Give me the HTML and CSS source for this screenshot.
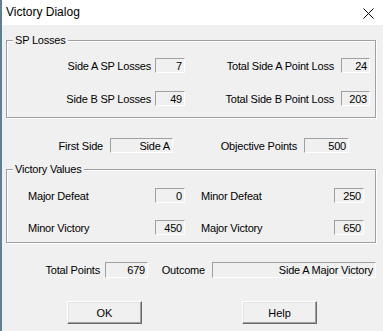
FILE: index.html
```html
<!DOCTYPE html>
<html>
<head>
<meta charset="utf-8">
<link rel="stylesheet" href="styles.css">
</head>
<body>
<div class="window">
  <div class="titlebar">
    <span class="title">Victory Dialog</span>
    <svg class="close" width="11" height="11" viewBox="0 0 11 11"><path d="M0.5 0.5 L10.5 10.5 M10.5 0.5 L0.5 10.5" stroke="#000" stroke-width="1" fill="none"/></svg>
  </div>
  <div class="content">
    <div class="group group-sp">
      <span class="legend">SP Losses</span>
      <div class="sp-grid">
        <span class="lbl lbl-r1">Side A SP Losses</span><span class="field">7</span>
        <span class="lbl lbl-r2">Total Side A Point Loss</span><span class="field">24</span>
        <span class="lbl lbl-r1">Side B SP Losses</span><span class="field">49</span>
        <span class="lbl lbl-r2">Total Side B Point Loss</span><span class="field">203</span>
      </div>
    </div>
    <div class="first-row">
      <span class="lbl lbl-r">First Side</span><span class="field">Side A</span>
      <span class="lbl lbl-r">Objective Points</span><span class="field">500</span>
    </div>
    <div class="group group-vv">
      <span class="legend">Victory Values</span>
      <div class="vv-grid">
        <span class="lbl lbl-l1">Major Defeat</span><span class="field">0</span>
        <span class="lbl lbl-l2">Minor Defeat</span><span class="field">250</span>
        <span class="lbl lbl-l1">Minor Victory</span><span class="field">450</span>
        <span class="lbl lbl-l2">Major Victory</span><span class="field">650</span>
      </div>
    </div>
    <div class="total-row">
      <span class="lbl lbl-t1">Total Points</span><span class="field">679</span>
      <span class="lbl lbl-r">Outcome</span><span class="field">Side A Major Victory</span>
    </div>
    <div class="buttons">
      <button class="btn">OK</button>
      <button class="btn">Help</button>
    </div>
  </div>
</div>
</body>
</html>
```
FILE: styles.css
```css
* { box-sizing: border-box; }
html, body { margin: 0; padding: 0; }
body {
  width: 383px;
  height: 331px;
  overflow: hidden;
  background: #f0f0f0;
  font-family: "Liberation Sans", Arial, sans-serif;
  font-size: 11px;
  color: #000;
}
.window {
  width: 383px;
  height: 331px;
  border-left: 2px solid #5a8195;
  background: #f0f0f0;
}
.titlebar {
  height: 25px;
  background: #fff;
  display: flex;
  align-items: center;
  justify-content: space-between;
  padding-left: 4px;
  padding-right: 9px;
}
.title {
  font-family: "Liberation Sans", Arial, sans-serif;
  font-size: 12px;
  color: #000;
  padding-bottom: 1px;
}
.close { display: block; margin-top: 1px; }
.content {
  display: flex;
  flex-direction: column;
}
.group {
  position: relative;
  margin-left: 4px;
  width: 370px;
  border: 1px solid #a0a0a0;
  box-shadow: inset 1px 1px 0 #fff, 1px 1px 0 #fff;
}
.legend {
  position: absolute;
  top: -7px;
  left: 6px;
  padding: 0 2px;
  line-height: 13px;
  background: #f0f0f0;
  letter-spacing: -0.2px;
}
.group-sp { margin-top: 15px; }
.sp-grid {
  display: grid;
  grid-template-columns: 148px 30px 156px 29px;
  grid-auto-rows: 15px;
  row-gap: 18px;
  padding: 17px 0 11px 0;
}
.lbl {
  display: flex;
  align-items: center;
  white-space: nowrap;
  letter-spacing: -0.2px;
}
.lbl-r1 { justify-content: flex-end; padding-right: 4px; }
.lbl-r2 { justify-content: flex-end; padding-right: 7px; }
.lbl-r { justify-content: flex-end; padding-right: 7px; }
.lbl-t1 { justify-content: flex-end; padding-right: 5px; }
.lbl-l1 { padding-left: 21px; }
.lbl-l2 { padding-left: 16px; }
.field {
  display: flex;
  align-items: center;
  justify-content: flex-end;
  padding-right: 2px;
  border-top: 1px solid #a0a0a0;
  border-left: 1px solid #a0a0a0;
  border-bottom: 1px solid #fff;
  border-right: 1px solid #fff;
  background: #f0f0f0;
  white-space: nowrap;
  overflow: hidden;
  letter-spacing: -0.2px;
}
.first-row {
  margin-top: 20px;
  display: grid;
  grid-template-columns: 108px 63px 131px 45px;
  height: 15px;
}
.group-vv { margin-top: 16px; }
.vv-grid {
  display: grid;
  grid-template-columns: 148px 30px 149px 30px;
  grid-auto-rows: 15px;
  row-gap: 17px;
  padding: 18px 0 7px 0;
}
.total-row {
  margin-top: 19px;
  display: grid;
  grid-template-columns: 103px 43px 64px 164px;
  height: 16px;
}
.buttons {
  margin-top: 23px;
  display: flex;
  gap: 100px;
  padding-left: 65px;
}
.btn {
  width: 75px;
  height: 23px;
  padding: 0;
  font-family: "Liberation Sans", Arial, sans-serif;
  font-size: 11px;
  color: #000;
  background: #f0f0f0;
  border: 1px solid;
  border-color: #fff #696969 #696969 #fff;
  box-shadow: inset -1px -1px 0 #a0a0a0, inset 1px 1px 0 #e3e3e3;
  border-radius: 0;
}
```
